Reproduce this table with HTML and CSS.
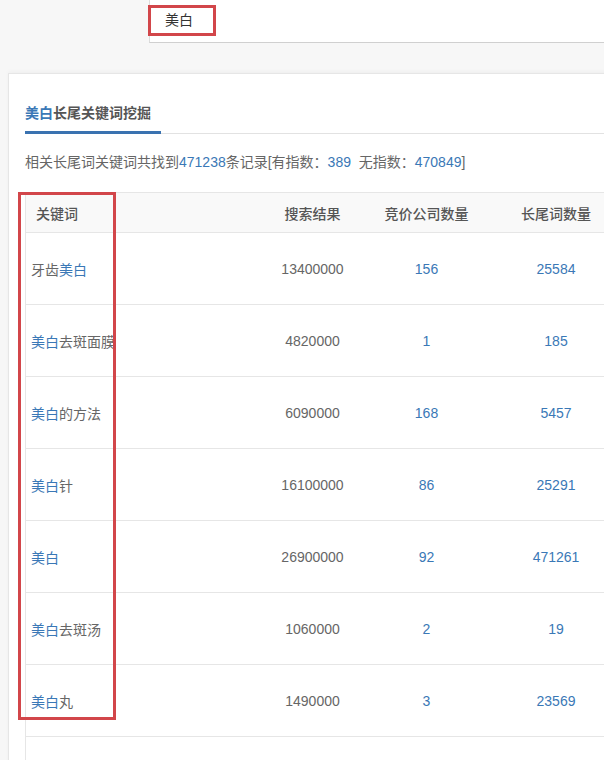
FILE: index.html
```html
<!DOCTYPE html>
<html lang="zh-CN">
<head>
<meta charset="utf-8">
<title>美白长尾关键词挖掘</title>
<link rel="stylesheet" href="styles.css">
</head>
<body>
<div class="page">
  <div class="topbar">
    <div class="search">美白</div>
  </div>
  <div class="card">
    <div class="nav">
      <div class="tab"><span class="blue">美白</span>长尾关键词挖掘</div>
    </div>
    <p class="summary">相关长尾词关键词共找到<span class="blue">471238</span>条记录[有指数：<span class="blue">389</span>&nbsp;&nbsp;无指数：<span class="blue">470849</span>]</p>
    <table class="kw-table">
      <colgroup>
        <col class="c1"><col class="c2"><col class="c3"><col class="c4">
      </colgroup>
      <thead>
        <tr><th class="kw">关键词</th><th>搜索结果</th><th>竞价公司数量</th><th>长尾词数量</th></tr>
      </thead>
      <tbody>
        <tr><td class="kw">牙齿<span class="blue">美白</span></td><td>13400000</td><td class="blue">156</td><td class="blue">25584</td></tr>
        <tr><td class="kw"><span class="blue">美白</span>去斑面膜</td><td>4820000</td><td class="blue">1</td><td class="blue">185</td></tr>
        <tr><td class="kw"><span class="blue">美白</span>的方法</td><td>6090000</td><td class="blue">168</td><td class="blue">5457</td></tr>
        <tr><td class="kw"><span class="blue">美白</span>针</td><td>16100000</td><td class="blue">86</td><td class="blue">25291</td></tr>
        <tr><td class="kw"><span class="blue">美白</span></td><td>26900000</td><td class="blue">92</td><td class="blue">471261</td></tr>
        <tr><td class="kw"><span class="blue">美白</span>去斑汤</td><td>1060000</td><td class="blue">2</td><td class="blue">19</td></tr>
        <tr><td class="kw"><span class="blue">美白</span>丸</td><td>1490000</td><td class="blue">3</td><td class="blue">23569</td></tr>
        <tr><td class="kw"></td><td></td><td></td><td></td></tr>
      </tbody>
    </table>
  </div>
  <div class="mark mark-search"></div>
  <div class="mark mark-col"></div>
</div>
</body>
</html>
```

FILE: styles.css
```css
html, body {
  margin: 0;
  padding: 0;
  background: #f7f7f7;
  overflow: hidden;
}
body {
  font-family: "Liberation Sans", "Noto Sans CJK SC", sans-serif;
  font-size: 14px;
  color: #666;
}
.page {
  position: relative;
  width: 604px;
  height: 760px;
  overflow: hidden;
}
.blue { color: #3a78b6; }

.topbar {
  display: flex;
  padding-left: 149px;
  height: 43px;
}
.search {
  flex: 1;
  background: #fff;
  border-left: 1px solid #dcdcdc;
  border-bottom: 1px solid #d0d0d0;
  padding-left: 15px;
  line-height: 40px;
  color: #333;
}

.card {
  margin: 30px 0 0 8px;
  width: 700px;
  background: #fff;
  border: 1px solid #e6e6e6;
  box-shadow: 0 -2px 4px rgba(0,0,0,0.03);
  padding: 0 0 0 16px;
  min-height: 700px;
}
.nav {
  display: flex;
  border-bottom: 1px solid #e2e2e2;
  padding-top: 29px;
}
.tab {
  font-weight: 600;
  color: #555;
  line-height: 20px;
  padding: 0 10px 8px 0;
  border-bottom: 3px solid #3a72b0;
  margin-bottom: -1px;
}
.summary {
  margin: 0;
  padding-top: 18px;
  line-height: 20px;
  height: 40px;
  box-sizing: content-box;
}
.kw-table {
  border-collapse: collapse;
  table-layout: fixed;
  width: 608px;
  border-left: 1px solid #e6e6e6;
  border-top: 1px solid #e6e6e6;
}
.c1 { width: 225px; }
.c2 { width: 124px; }
.c3 { width: 104px; }
.c4 { width: 155px; }
.kw-table th {
  height: 39px;
  background: #f9f9f9;
  font-weight: 500;
  color: #555;
  text-align: center;
  border-bottom: 1px solid #e6e6e6;
  padding: 0;
}
.kw-table th.kw {
  text-align: left;
  padding-left: 10px;
}
.kw-table td {
  height: 71px;
  text-align: center;
  border-bottom: 1px solid #e6e6e6;
  padding: 0;
}
.kw-table td.kw {
  text-align: left;
  padding-left: 5px;
}

.mark {
  position: absolute;
  border: 3px solid #d2464a;
  box-sizing: border-box;
}
.mark-search {
  left: 148px;
  top: 5px;
  width: 68px;
  height: 31px;
}
.mark-col {
  left: 18px;
  top: 192px;
  width: 98px;
  height: 528px;
}
```
